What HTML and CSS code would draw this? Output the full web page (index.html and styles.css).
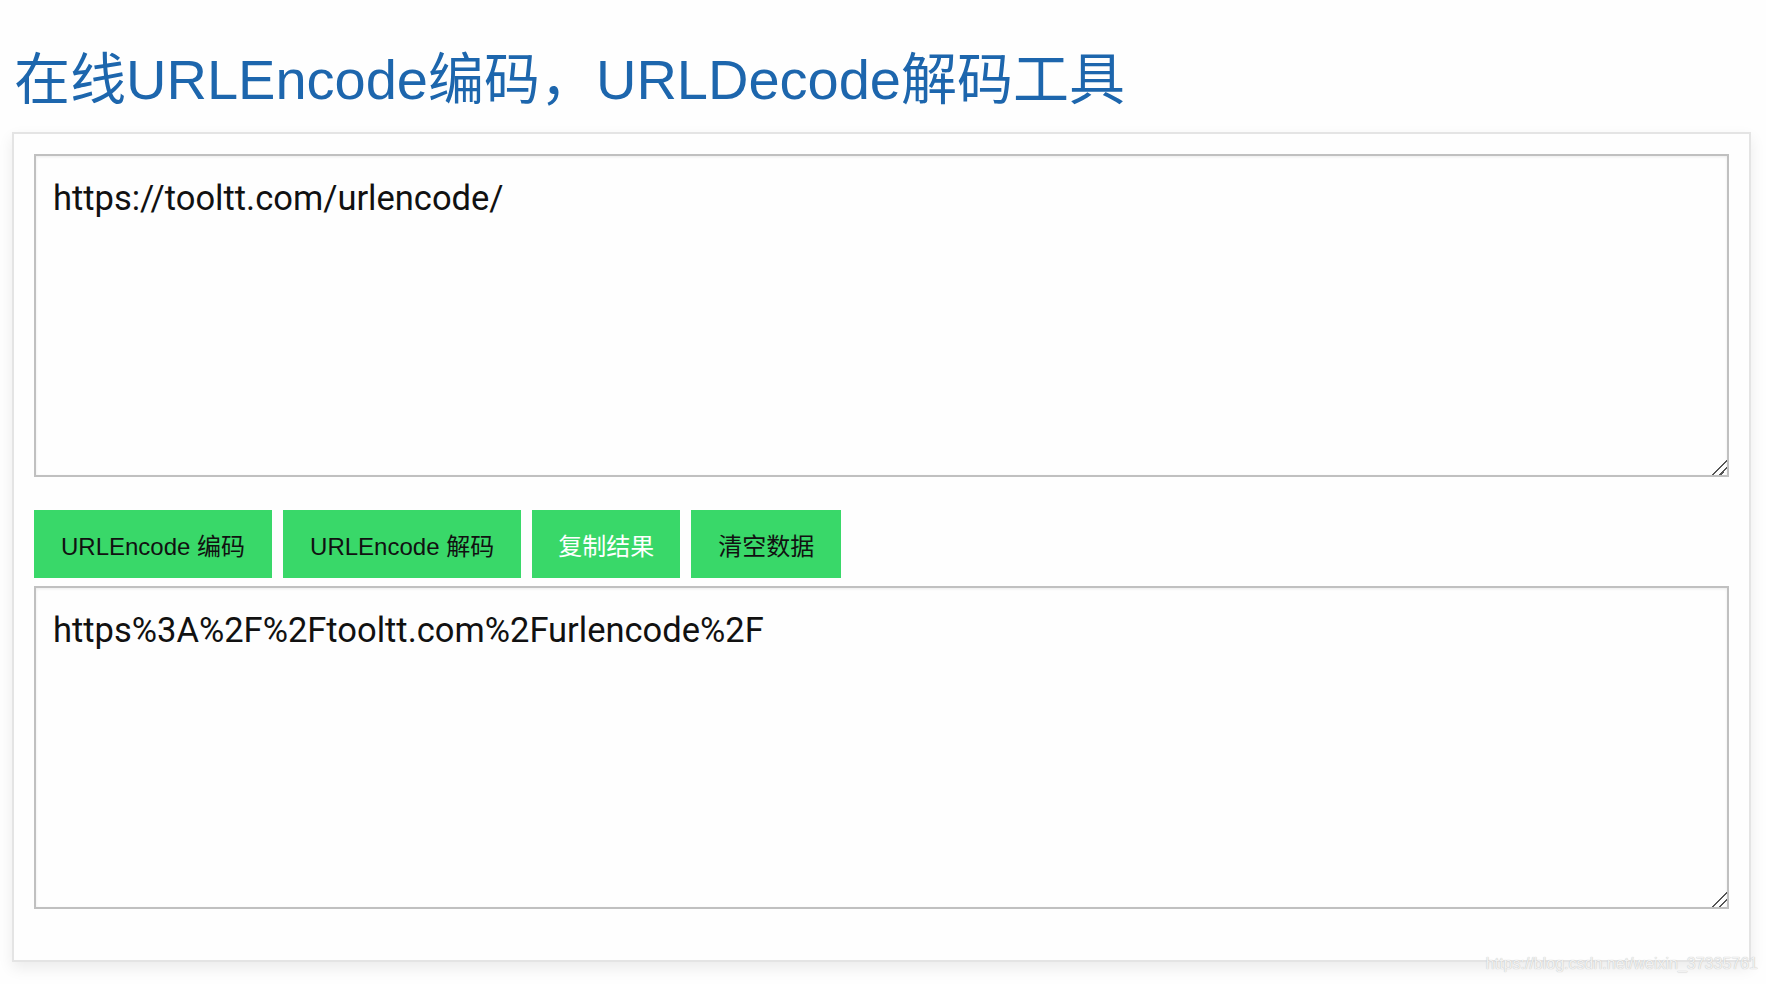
FILE: index.html
```html
<!DOCTYPE html>
<html lang="zh-CN">
<head>
<meta charset="utf-8">
<title>在线URLEncode编码，URLDecode解码工具</title>
<link rel="stylesheet" href="styles.css">
</head>
<body>
<h1 class="title">在线URLEncode编码，URLDecode解码工具</h1>
<div class="card">
  <textarea class="box">https://tooltt.com/urlencode/</textarea>
  <div class="actions">
    <button class="btn">URLEncode 编码</button>
    <button class="btn">URLEncode 解码</button>
    <button class="btn btn-light">复制结果</button>
    <button class="btn">清空数据</button>
  </div>
  <textarea class="box">https%3A%2F%2Ftooltt.com%2Furlencode%2F</textarea>
</div>
<div class="watermark">https://blog.csdn.net/weixin_37335761</div>
</body>
</html>
```

FILE: styles.css
```css
html, body {
  margin: 0;
  padding: 0;
  background: #fefefe;
}

body {
  position: relative;
  height: 984px;
  overflow: hidden;
  font-family: "Liberation Sans", Arial, "Noto Sans CJK SC", sans-serif;
}

.title {
  margin: 46px 0 19px 14px;
  font-size: 56px;
  line-height: 67px;
  font-weight: normal;
  color: #1d66ad;
  white-space: nowrap;
}

.card {
  margin: 0 15px 0 12px;
  border: 2px solid #e4e4e4;
  padding: 20px 20px 51px;
  background: #fefefe;
  box-shadow: 0 6px 14px rgba(0, 0, 0, 0.08);
}

.box {
  display: block;
  box-sizing: border-box;
  width: 100%;
  height: 323px;
  margin: 0;
  border: 2px solid #c0c0c0;
  padding: 22px 17px;
  font-family: Roboto, "Liberation Sans", Arial, "Noto Sans CJK SC", sans-serif;
  font-size: 34.5px;
  line-height: 1.2;
  color: #111;
  background: #fefefe;
  box-shadow: inset 0 1px 3px rgba(0, 0, 0, 0.08);
  resize: vertical;
  outline: none;
}

.box::-webkit-resizer {
  background:
    linear-gradient(135deg,
      transparent 0 48%, #555 48% 56%, transparent 56% 72%,
      #555 72% 80%, transparent 80%);
}

.actions {
  display: flex;
  gap: 11px;
  margin: 33px 0 8px;
}

.btn {
  height: 68px;
  padding: 0 27px;
  border: none;
  background: #39d869;
  color: #111;
  font-family: "Liberation Sans", Arial, "Noto Sans CJK SC", sans-serif;
  font-size: 24px;
  cursor: pointer;
}

.btn-light {
  color: #fff;
  padding: 0 26px;
}

.watermark {
  position: absolute;
  right: 8px;
  top: 955px;
  font-family: "Liberation Sans", Arial, sans-serif;
  font-size: 16px;
  color: #f2f2f2;
  text-shadow: 0 0 1px #b0b0b0;
}
```
